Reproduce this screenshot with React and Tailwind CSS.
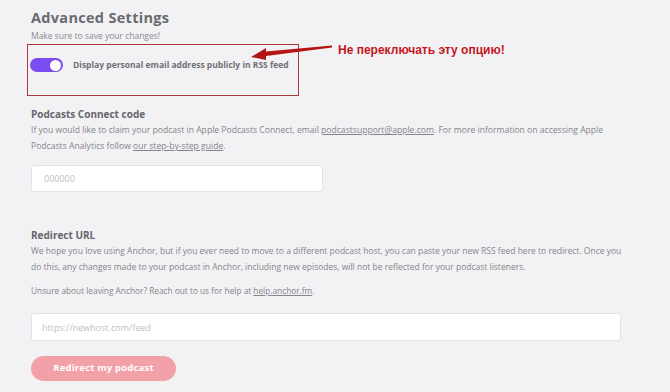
import React, { useState } from 'react';

const font = { fontFamily: '"Open Sans", "Liberation Sans", sans-serif' };

const App = () => {
  const [publicEmail, setPublicEmail] = useState(true);
  const [code, setCode] = useState('');
  const [feed, setFeed] = useState('');

  return (
    <div className="relative w-[670px] h-[392px] overflow-hidden bg-[#f2f2f4] pl-[31px] pt-[9px]" style={font}>
      {/* Advanced Settings */}
      <h1 className="text-[14.5px] leading-[18px] font-bold text-[#6a6a70] tracking-[0.3px]">Advanced Settings</h1>
      <p className="mt-[3px] text-[8.5px] leading-[12px] text-[#8a8a90]">Make sure to save your changes!</p>

      <div className="mt-[2px] -ml-[4px] w-[272px] h-[52px] border border-[#a83a3a] pl-[2px] pt-[13px]">
        <div className="flex items-center gap-[10px]">
          <button
            onClick={() => setPublicEmail(!publicEmail)}
            className={`w-[33px] h-[14px] rounded-full flex items-center px-[2px] ${publicEmail ? 'bg-[#7b4cf2] justify-end' : 'bg-gray-300 justify-start'}`}
          >
            <span className="w-[11px] h-[11px] rounded-full bg-white" />
          </button>
          <span className="whitespace-nowrap text-[8.5px] font-bold text-[#707076]">Display personal email address publicly in RSS feed</span>
        </div>
      </div>

      {/* Podcasts Connect code */}
      <h2 className="mt-[11px] text-[10px] leading-[14px] font-bold text-[#66666c]">Podcasts Connect code</h2>
      <p className="mt-[1px] w-[630px] text-[8.6px] leading-[16px] text-[#85858b]">
        If you would like to claim your podcast in Apple Podcasts Connect, email <a className="underline">podcastsupport@apple.com</a>. For more information on accessing Apple
        <br />Podcasts Analytics follow <a className="underline">our step-by-step guide</a>.
      </p>
      <input
        value={code}
        onChange={e => setCode(e.target.value)}
        placeholder="000000"
        className="mt-[11px] block w-[292px] h-[27px] rounded-[3px] bg-white border border-[#e4e4e8] px-[12px] text-[9px] text-[#555] placeholder-[#c0c0c4] outline-none"
      />

      {/* Redirect URL */}
      <h2 className="mt-[36px] text-[10px] leading-[14px] font-bold text-[#66666c]">Redirect URL</h2>
      <p className="mt-[1px] w-[630px] text-[8.5px] leading-[15.5px] text-[#85858b]">
        We hope you love using Anchor, but if you ever need to move to a different podcast host, you can paste your new RSS feed here to redirect. Once you
        <br />do this, any changes made to your podcast in Anchor, including new episodes, will not be reflected for your podcast listeners.
      </p>
      <p className="mt-[9px] text-[8.3px] leading-[15px] text-[#85858b]">
        Unsure about leaving Anchor? Reach out to us for help at <a className="underline">help.anchor.fm</a>.
      </p>
      <input
        value={feed}
        onChange={e => setFeed(e.target.value)}
        placeholder="https://newhost.com/feed"
        className="mt-[15px] block w-[590px] h-[28px] rounded-[3px] bg-white border border-[#e4e4e8] px-[10px] text-[9px] text-[#555] placeholder-[#c0c0c4] outline-none"
      />
      <button className="mt-[15px] w-[145px] h-[25px] rounded-full bg-[#f2a1a9] text-white text-[9.5px] font-bold tracking-[0.2px]">
        Redirect my podcast
      </button>

      {/* Annotation */}
      <svg className="absolute left-0 top-0 pointer-events-none" width="670" height="100">
        <polygon points="266,51.5 332,45.5 332,47.5 266,56" fill="#b41414" />
        <polygon points="251,57 266,48 266,60" fill="#b41414" />
      </svg>
      <div
        className="absolute left-[338px] top-[41px] text-[12px] font-bold text-[#c4161c]"
        style={{ fontFamily: '"Liberation Sans", Arial, sans-serif' }}
      >
        Не переключать эту опцию!
      </div>
    </div>
  );
};

export default App;
